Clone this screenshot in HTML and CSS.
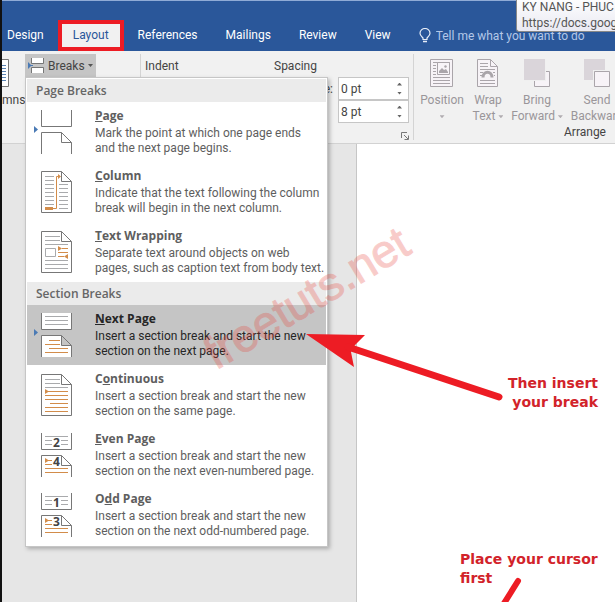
FILE: index.html
```html
<!DOCTYPE html>
<html lang="en">
<head>
<meta charset="utf-8">
<title>Document - Layout</title>
<link rel="stylesheet" href="styles.css">
</head>
<body>
<div class="window">
  <header class="titlebar">
    <nav class="tabs" aria-label="Ribbon tabs">
      <a class="tab" href="#design">Design</a>
      <a class="tab tab-active" href="#layout">Layout</a>
      <a class="tab" href="#references">References</a>
      <a class="tab" href="#mailings">Mailings</a>
      <a class="tab" href="#review">Review</a>
      <a class="tab" href="#view">View</a>
    </nav>
    <label class="tellme">
      <svg width="12" height="16" viewBox="0 0 12 16" fill="none" stroke="#e8eef8" aria-hidden="true"><path d="M4 11.5V10C2.500 8.500 1 7.500 1 5.300a5 4.800 0 0 1 10 0C11 7.500 9.500 8.500 8 10v1.500z" stroke-width="1.200"/><path d="M4 13.500h4" stroke-width="1.500"/></svg>
      <input type="text" placeholder="Tell me what you want to do" aria-label="Tell me what you want to do">
    </label>
  </header>

  <section class="ribbon">
    <div class="group group-setup">
      <button class="columns" type="button">
        <svg width="8" height="28" viewBox="0 0 8 28" fill="none" aria-hidden="true"><path d="M-1 .5h7.500v27H-1" fill="#fff" stroke="#777"/><path d="M0 6.500h4M0 9.500h4M0 12.500h4M0 15.500h4M0 18.500h4M0 21.500h4" stroke="#5b84b4"/></svg>
        <span>mns</span>
      </button>
      <button class="breaks" type="button" aria-expanded="true">
        <svg width="18" height="17" viewBox="0 0 18 17" aria-hidden="true"><path d="M5 1h11v5H5zM5 11h11v5H5z" fill="#fff"/><path d="M4.500 1v5.500h12V1M4.500 16v-5.500h12V16" fill="none" stroke="#777"/><path d="M1 5l3.500 3.500L1 12z" fill="#4a7ab5"/><path d="M4 8.500h2" stroke="#4a7ab5"/></svg>
        <span>Breaks</span>
        <svg width="5" height="3" viewBox="0 0 5 3" aria-hidden="true"><path d="M0 0h5L2.500 3z" fill="#555"/></svg>
      </button>
    </div>
    <div class="group group-paragraph">
      <div class="heads"><span>Indent</span><span>Spacing</span></div>
      <div class="spin-row">
        <label for="before">Before:</label>
        <div class="spin"><input id="before" type="text" value="0 pt"><span class="arrows"><button type="button" aria-label="Increase before"></button><button class="down" type="button" aria-label="Decrease before"></button></span></div>
      </div>
      <div class="spin-row">
        <div class="spin"><input type="text" value="8 pt" aria-label="Spacing after"><span class="arrows"><button type="button" aria-label="Increase after"></button><button class="down" type="button" aria-label="Decrease after"></button></span></div>
      </div>
      <button class="launcher" type="button" aria-label="Paragraph settings"><svg width="8" height="8" viewBox="0 0 8 8" fill="none" stroke="#777" aria-hidden="true"><path d="M.5 6V.5H6M3 3l4 4M7.500 3.500v4h-4"/></svg></button>
    </div>
    <div class="group group-arrange">
      <div class="tools">
        <button type="button">
          <svg width="24" height="28" viewBox="0 0 24 28" fill="none" stroke="#aaa5aa" aria-hidden="true"><path d="M.5.5h22v27H.5z" fill="#f7f3f7"/><path d="M3 3.500h17M3 6.500h3M3 9.500h3M3 12.500h3M3 15.500h3M3 18.500h17M3 21.500h17M3 24.500h17"/><path d="M7.500 3.500h12v12h-12z" fill="#f8f4f8"/><path d="M9 14v-2l3-3 2 2 2-1 2 3v1z" fill="#aaa5aa" stroke="none"/><circle cx="15.500" cy="7.500" r="1.200" fill="#aaa5aa" stroke="none"/></svg>
          <span>Position<br><i class="caret"></i></span>
        </button>
        <button type="button">
          <svg width="22" height="28" viewBox="0 0 22 28" fill="none" stroke="#aaa5aa" aria-hidden="true"><path d="M.5.5h13l7 7v20H.5z" fill="#f7f3f7"/><path d="M13.500.5v7h7M3 4.500h8M3 7.500h8M3 10.500h15M3 13.500h3M16 13.500h2M3 16.500h2M17 16.500h1M3 21.500h15M3 24.500h15"/><path d="M6 18.500c0-7 9-7 9 0" stroke-width="3"/></svg>
          <span>Wrap<br>Text <i class="caret"></i></span>
        </button>
        <button type="button">
          <svg width="26" height="28" viewBox="0 0 26 28" aria-hidden="true"><path d="M10.500 12.500h15v15h-15z" fill="#f7f3f7" stroke="#aaa5aa"/><path d="M0 0h22v22H0z" fill="#f0f0f0"/><path d="M0 0h21v21H0z" fill="#dad5da"/></svg>
          <span>Bring<br>Forward <i class="caret"></i></span>
        </button>
        <button type="button">
          <svg width="26" height="28" viewBox="0 0 26 28" aria-hidden="true"><path d="M0 0h21v21H0z" fill="#dad5da"/><path d="M9 11h17v17H9z" fill="#f0f0f0"/><path d="M10.500 12.500h15v15h-15z" fill="#f7f3f7" stroke="#aaa5aa"/></svg>
          <span>Send<br>Backward</span>
        </button>
      </div>
      <div class="group-name">Arrange</div>
    </div>
  </section>

  <main class="workspace">
    <div class="page"></div>
  </main>

  <div class="menu" role="menu">
    <h2>Page Breaks</h2>
    <button class="item" role="menuitem" type="button">
      <svg width="40" height="46" viewBox="0 0 40 46" fill="none" aria-hidden="true"><path d="M8.500 0v16.500h30V0M8.500 44V22.500h20l10 10V44M28.500 22.500v10h10" stroke="#777"/><path d="M1 16l4 3.500L1 23z" fill="#4a7ab5"/></svg>
      <span><b><u>P</u>age</b><span>Mark the point at which one page ends<br>and the next page begins.</span></span>
    </button>
    <button class="item" role="menuitem" type="button">
      <svg width="40" height="46" viewBox="0 0 40 46" fill="none" aria-hidden="true"><path d="M8.500 1.500h20l10 10v31h-30zM28.500 1.500v10h10" stroke="#777"/><path d="M12 6.500h9M12 10.500h9M12 14.500h9M12 18.500h9M12 22.500h9M12 26.500h9M12 30.500h9M12 34.500h9M26 14.500h9M26 18.500h9M26 22.500h9M26 26.500h9M26 30.500h9M26 34.500h9M26 38.500h9" stroke="#a9aaac"/><path d="M20 38.500h3.500v-32H26" stroke="#d28c4a"/><path d="M12 37h8v3h-8zM25 4l3 2.500-3 2.500z" fill="#d28c4a"/></svg>
      <span><b><u>C</u>olumn</b><span>Indicate that the text following the column<br>break will begin in the next column.</span></span>
    </button>
    <button class="item" role="menuitem" type="button">
      <svg width="40" height="46" viewBox="0 0 40 46" fill="none" aria-hidden="true"><path d="M8.500 1.500h20l10 10v31h-30zM28.500 1.500v10h10" stroke="#777"/><path d="M12 6.500h15M12 10.500h15M12 14.500h23M12 30.500h23M12 34.500h23M12 38.500h23M12.500 18.500h10v8h-10z" stroke="#a9aaac"/><path d="M29 18.500h6M25 22.500h10M25 26.500h6" stroke="#d28c4a"/><path d="M25 16l4 2.500-4 2.500zM35 24l-4 2.500 4 2.500z" fill="#d28c4a"/></svg>
      <span><b><u>T</u>ext Wrapping</b><span>Separate text around objects on web<br>pages, such as caption text from body text.</span></span>
    </button>
    <h2>Section Breaks</h2>
    <button class="item item-selected" role="menuitem" type="button">
      <svg width="40" height="46" viewBox="0 0 40 46" fill="none" aria-hidden="true"><path d="M8.500 0v16.500h30V0M8.500 44V22.500h20l10 10V44M28.500 22.500v10h10" stroke="#777" fill="#fff"/><path d="M12 3.500h23M12 7.500h23M12 11.500h23" stroke="#a9aaac"/><path d="M16 27.500h11M12 31.500h15M16 35.500h19M12 39.500h23" stroke="#d28c4a"/><path d="M1 16l4 3.500L1 23z" fill="#4a7ab5"/></svg>
      <span><b><u>N</u>ext Page</b><span>Insert a section break and start the new<br>section on the next page.</span></span>
    </button>
    <button class="item" role="menuitem" type="button">
      <svg width="40" height="46" viewBox="0 0 40 46" fill="none" aria-hidden="true"><path d="M8.500 1.500h20l10 10v31h-30zM28.500 1.500v10h10" stroke="#777"/><path d="M12 6.500h15M12 10.500h15M12 14.500h23" stroke="#a9aaac"/><path d="M14 18.500h21M12 22.500h23M12 26.500h23M17 30.500h18M12 34.500h23M12 38.500h23" stroke="#d28c4a"/><path d="M12 16l4 2.500-4 2.500z" fill="#d28c4a"/></svg>
      <span><b>C<u>o</u>ntinuous</b><span>Insert a section break and start the new<br>section on the same page.</span></span>
    </button>
    <button class="item" role="menuitem" type="button">
      <svg width="40" height="46" viewBox="0 0 40 46" fill="none" aria-hidden="true"><path d="M8.500 0v16.500h30V0M8.500 44V22.500h20l10 10V44M28.500 22.500v10h10" stroke="#777"/><path d="M12 3.500h23M12 7.500h7M28 7.500h7M12 11.500h7M28 11.500h7" stroke="#a9aaac"/><path d="M12 27.500h7M12 31.500h7M12 35.500h23M12 39.500h23" stroke="#d28c4a"/><path d="M12 25l4 2.500-4 2.500z" fill="#d28c4a"/><text class="digit" x="20" y="14">2</text><text class="digit" x="20" y="33">4</text></svg>
      <span><b><u>E</u>ven Page</b><span>Insert a section break and start the new<br>section on the next even-numbered page.</span></span>
    </button>
    <button class="item" role="menuitem" type="button">
      <svg width="40" height="46" viewBox="0 0 40 46" fill="none" aria-hidden="true"><path d="M8.500 0v16.500h30V0M8.500 44V22.500h20l10 10V44M28.500 22.500v10h10" stroke="#777"/><path d="M12 3.500h23M12 7.500h7M28 7.500h7M12 11.500h7M28 11.500h7" stroke="#a9aaac"/><path d="M12 27.500h7M12 31.500h7M12 35.500h23M12 39.500h23" stroke="#d28c4a"/><path d="M12 25l4 2.500-4 2.500z" fill="#d28c4a"/><text class="digit" x="20" y="14">1</text><text class="digit" x="20" y="33">3</text></svg>
      <span><b>O<u>d</u>d Page</b><span>Insert a section break and start the new<br>section on the next odd-numbered page.</span></span>
    </button>
  </div>

  <div class="tooltip" role="tooltip">KY NANG - PHUC<br>https://docs.goog</div>
  <div class="watermark">freetuts.net</div>
  <svg class="pointer" width="202" height="70" viewBox="0 0 202 70" aria-hidden="true"><path d="M3 3l59 1-10 10-4 7 3 15z" fill="#ed1c24"/><path d="M45 16l151 50" stroke="#ed1c24" stroke-width="7" stroke-linecap="round"/></svg>
  <p class="note note-insert">Then insert<br>your break</p>
  <p class="note note-cursor">Place your cursor<br>first</p>
  <svg class="pointer-cursor" width="30" height="26" viewBox="0 0 30 26" aria-hidden="true"><path d="M21 5L6 29" stroke="#ed1c24" stroke-width="6" stroke-linecap="round"/></svg>
</div>
</body>
</html>
```
FILE: styles.css
```css
* {
  box-sizing: border-box;
}

body {
  margin: 0;
  font: 12px/16px Roboto, "Noto Sans", sans-serif;
  color: #444;
}

button,
input {
  margin: 0;
  padding: 0;
  border: 0;
  background: none;
  font: inherit;
  color: inherit;
}

svg {
  display: block;
  flex: none;
}

.window {
  position: relative;
  display: flex;
  flex-direction: column;
  height: 100vh;
  overflow: hidden;
  border-left: 2px solid #111;
}

.titlebar {
  display: flex;
  align-items: flex-end;
  height: 51px;
  border-top: 1px solid #8fabd6;
  background: #2a579a;
  color: #fff;
}

.tabs {
  display: flex;
  height: 31px;
}

.tab {
  padding: 0 14px;
  line-height: 31px;
  color: inherit;
  text-decoration: none;
}

.tab:first-child {
  padding-left: 5px;
}

.tab-active {
  padding: 0 11px;
  border: 4px solid #ed1c24;
  background: #f1f1f1;
  line-height: 23px;
  color: #2a579a;
}

.tellme {
  display: flex;
  flex: 1;
  align-items: center;
  gap: 5px;
  height: 31px;
  padding-left: 14px;
}

.tellme input {
  flex: 1;
  min-width: 0;
}

.tellme input::placeholder {
  color: #b4c8e8;
  opacity: 1;
}

.ribbon {
  display: flex;
  flex: none;
  height: 93px;
  padding-top: 3px;
  border-bottom: 1px solid #d2d2d2;
  background: #f1f1f1;
}

.group {
  flex: none;
  height: 86px;
  border-right: 1px solid #d4d4d4;
}

.group-setup {
  display: flex;
  align-items: flex-start;
  width: 139px;
}

.columns {
  display: flex;
  flex-direction: column;
  gap: 5px;
  width: 23px;
  padding-top: 5px;
}

.breaks {
  display: flex;
  align-items: center;
  gap: 3px;
  width: 71px;
  height: 23px;
  padding-left: 2px;
  background: #c5c5c5;
}

.group-paragraph {
  display: flex;
  flex-direction: column;
  width: 273px;
  padding: 4px 4px 0;
}

.heads {
  display: grid;
  grid-template-columns: 129px 1fr;
  margin-bottom: 3px;
}

.spin-row {
  display: flex;
  justify-content: flex-end;
  align-items: center;
  gap: 5px;
}

.spin {
  display: flex;
  width: 71px;
  height: 23px;
  border: 1px solid #c6c6c6;
  background: #fff;
}

.spin input {
  flex: 1;
  min-width: 0;
  padding-left: 2px;
}

.arrows {
  display: flex;
  flex-direction: column;
  justify-content: center;
  gap: 6px;
  width: 11px;
}

.arrows button {
  width: 5px;
  height: 3px;
  background: #666;
  clip-path: polygon(50% 0, 100% 100%, 0 100%);
}

.arrows .down {
  clip-path: polygon(0 0, 100% 0, 50% 100%);
}

.launcher {
  align-self: flex-end;
  margin-top: 9px;
}

.group-arrange {
  width: 342px;
  border: 0;
}

.tools {
  display: grid;
  grid-template-columns: 42px 46px 48px 68px;
  gap: 2px;
  padding: 5px 0 0 7px;
  color: #9a969a;
}

.tools button {
  display: flex;
  flex-direction: column;
  align-items: center;
  gap: 5px;
  white-space: nowrap;
}

.caret {
  display: inline-block;
  width: 5px;
  height: 3px;
  background: #b0acb0;
  clip-path: polygon(0 0, 100% 0, 50% 100%);
  vertical-align: middle;
}

.group-name {
  text-align: center;
}

.workspace {
  display: flex;
  flex: 1;
  padding-left: 354px;
  background: #e6e6e6;
}

.page {
  flex: 1;
  border-left: 1px solid #c6c6c6;
  background: #fff;
}

.menu {
  position: absolute;
  top: 77px;
  left: 23px;
  width: 303px;
  padding: 1px;
  border: 1px solid #c6c6c6;
  background: #fff;
  box-shadow: 2px 2px 4px rgba(0, 0, 0, 0.25);
}

.menu h2 {
  margin: 0;
  padding-left: 9px;
  background: #ebebeb;
  font: 600 12px/23px "Open Sans", sans-serif;
  color: #666;
}

.item {
  display: flex;
  gap: 22px;
  width: 100%;
  height: 60px;
  padding: 5px 0 0 6px;
  line-height: 15px;
  text-align: left;
  white-space: nowrap;
  color: #5e5e5e;
}

.item svg {
  margin-top: 3px;
}

.item b {
  display: block;
  margin-bottom: 2px;
  font: bold 12px/17px "Open Sans", sans-serif;
}

.item-selected {
  background: #c5c5c5;
  color: #262626;
}

.digit {
  fill: #444;
  font: bold 12px "Open Sans", sans-serif;
}

.tooltip {
  position: absolute;
  top: -4px;
  right: 0;
  width: 99px;
  padding: 2px 0 0 5px;
  border: 1px solid #888;
  border-right: 0;
  border-radius: 3px 0 0 3px;
  background: linear-gradient(#fff, #e9e9f2);
  white-space: nowrap;
  color: #555;
}

.watermark {
  position: absolute;
  top: 334px;
  left: 216px;
  transform: rotate(-31deg);
  transform-origin: 0 100%;
  font: 46px/40px "Liberation Sans", sans-serif;
  color: #e83c32;
  -webkit-text-stroke: 1px #e83c32;
  opacity: 0.26;
}

.pointer {
  position: absolute;
  top: 331px;
  left: 301px;
}

.pointer-cursor {
  position: absolute;
  top: 576px;
  left: 495px;
}

.note {
  position: absolute;
  margin: 0;
  font: bold 14px/19px "DejaVu Sans", sans-serif;
  color: #d2232a;
}

.note-insert {
  top: 374px;
  right: 17px;
  text-align: right;
}

.note-cursor {
  top: 550px;
  left: 458px;
}
```
